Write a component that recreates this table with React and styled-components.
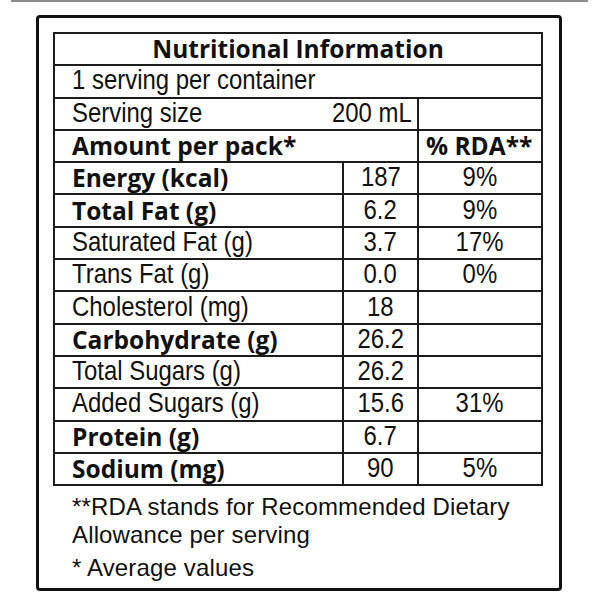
import React from 'react'
import styled, { createGlobalStyle } from 'styled-components'

const GlobalStyle = createGlobalStyle`
  body {
    margin: 0;
    background: #fff;
    color: #111;
    font-family: "Liberation Sans", Arial, sans-serif;
  }
`

const Page = styled.div`
  width: 600px;
  height: 600px;
  background: #fff;
`

const TopRule = styled.div`
  margin-left: 11px;
  width: 577px;
  height: 2px;
  background: #8c8c8c;
`

const Label = styled.div`
  box-sizing: border-box;
  margin: 13px 0 0 36px;
  width: 526px;
  border: 3px solid #111;
  border-radius: 4px;
  padding: 14px 16px 6px 14px;
`

const Table = styled.div`
  display: grid;
  grid-template-columns: 287px 73px 1fr;
  grid-auto-rows: 30.3px;
  gap: 2px;
  padding: 2px;
  width: 490px;
  box-sizing: border-box;
  background: #1c1c1c;
`

const Cell = styled.div`
  background: #fff;
  grid-column: span ${p => p.$span || 1};
  display: flex;
  align-items: center;
  justify-content: ${p => p.$align || 'flex-start'};
  padding: ${p => p.$pad || '0 0 0 17px'};
  font-family: ${p => p.$bold
    ? '"Open Sans", "Noto Sans", sans-serif'
    : '"Liberation Sans", Arial, sans-serif'};
  font-weight: ${p => p.$bold ? 700 : 400};
  font-size: 24.5px;
  line-height: 30px;
  white-space: nowrap;
`

// condensed face: the label's regular type is a narrow grotesque
const Narrow = styled.span`
  display: inline-block;
  font-size: 27.5px;
  line-height: 28px;
  margin-bottom: 2px;
  transform: scaleX(0.87);
  transform-origin: ${p => p.$origin || 'left'} center;
`

const Footer = styled.div`
  padding: 7px 0 0 19px;
  font-size: 24px;
  letter-spacing: 0.15px;
  line-height: 28px;
  white-space: nowrap;
`

const Note = styled.p`
  margin: 0 0 ${p => p.$gap || 0}px;
`

const rows = [
  { label: 'Energy (kcal)', bold: true, value: '187', rda: '9%' },
  { label: 'Total Fat (g)', bold: true, value: '6.2', rda: '9%' },
  { label: 'Saturated Fat (g)', value: '3.7', rda: '17%' },
  { label: 'Trans Fat (g)', value: '0.0', rda: '0%' },
  { label: 'Cholesterol (mg)', value: '18' },
  { label: 'Carbohydrate (g)', bold: true, value: '26.2' },
  { label: 'Total Sugars (g)', value: '26.2' },
  { label: 'Added Sugars (g)', value: '15.6', rda: '31%' },
  { label: 'Protein (g)', bold: true, value: '6.7' },
  { label: 'Sodium (mg)', bold: true, value: '90', rda: '5%' }
]

export default function App () {
  return (
    <Page>
      <GlobalStyle />
      <TopRule />
      <Label>
        <Table>
          <Cell $span={3} $bold $align='center' $pad='0'>Nutritional Information</Cell>
          <Cell $span={3}><Narrow>1 serving per container</Narrow></Cell>
          <Cell $span={2} $pad='0 5px 0 17px' style={{ justifyContent: 'space-between' }}>
            <Narrow>Serving size</Narrow>
            <Narrow $origin='right'>200 mL</Narrow>
          </Cell>
          <Cell />
          <Cell $span={2} $bold>Amount per pack*</Cell>
          <Cell $bold $pad='0 0 0 7px'>% RDA**</Cell>
          {rows.map(row => (
            <React.Fragment key={row.label}>
              <Cell $bold={row.bold}>
                {row.bold ? row.label : <Narrow>{row.label}</Narrow>}
              </Cell>
              <Cell $align='center' $pad='0'><Narrow $origin='center'>{row.value}</Narrow></Cell>
              <Cell $align='center' $pad='0'>
                {row.rda && <Narrow $origin='center'>{row.rda}</Narrow>}
              </Cell>
            </React.Fragment>
          ))}
        </Table>
        <Footer>
          <Note $gap={5}>**RDA stands for Recommended Dietary<br />Allowance per serving</Note>
          <Note>* Average values</Note>
        </Footer>
      </Label>
    </Page>
  )
}
